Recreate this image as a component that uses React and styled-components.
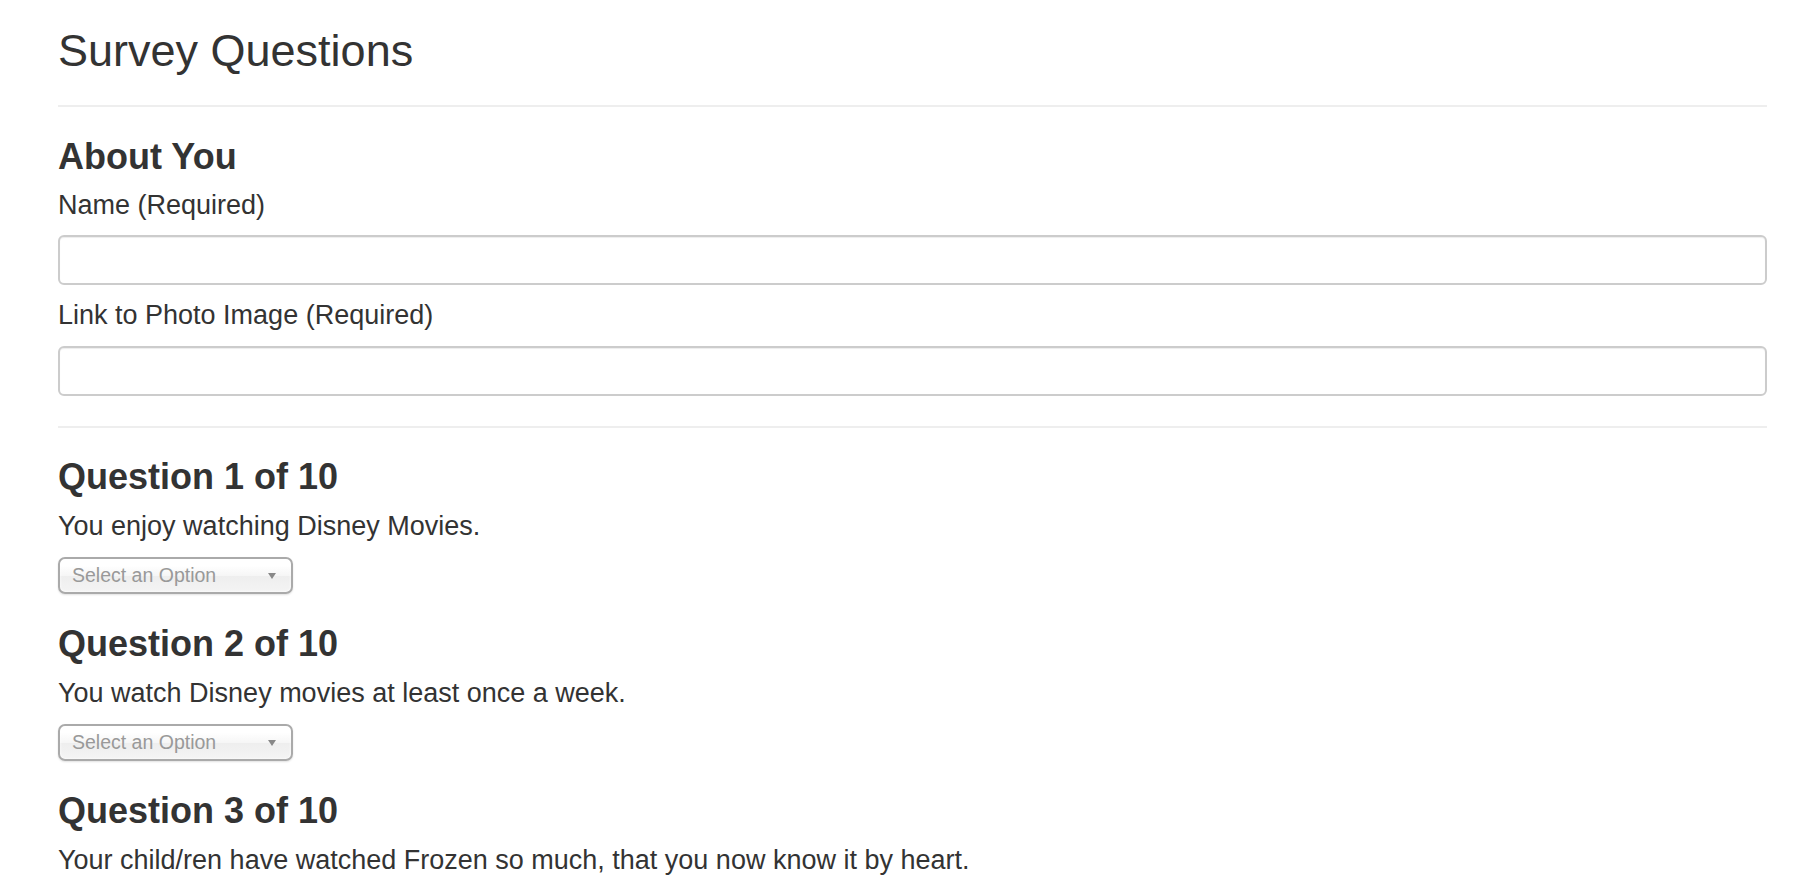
import React from 'react';
import styled, { createGlobalStyle } from 'styled-components';

const GlobalStyle = createGlobalStyle`
  html, body {
    margin: 0;
    padding: 0;
    background: #fff;
  }
  body {
    font-family: "Liberation Sans", Arial, Helvetica, sans-serif;
    color: #333;
  }
  * {
    box-sizing: border-box;
  }
`;

const Page = styled.div`
  padding: 26px 35px 40px 58px;
`;

const Title = styled.h2`
  margin: 0;
  font-size: 45px;
  line-height: 50px;
  font-weight: 400;
  color: #333;
`;

const Rule = styled.hr`
  margin: ${props => props.top}px 0 0;
  border: 0;
  border-top: 2px solid #eee;
  height: 0;
`;

const Section = styled.section`
  display: flex;
  flex-direction: column;
  margin-top: ${props => props.top}px;
`;

const Heading = styled.h3`
  margin: 0;
  font-size: 36px;
  line-height: 40px;
  font-weight: 700;
  color: #333;
`;

const Label = styled.label`
  display: block;
  margin-top: ${props => props.top}px;
  font-size: 27px;
  line-height: 30px;
`;

const Prompt = styled.p`
  margin: 14px 0 0;
  font-size: 27px;
  line-height: 30px;
`;

const TextInput = styled.input`
  display: block;
  width: 100%;
  height: 50px;
  margin-top: ${props => props.top}px;
  padding: 9px 18px;
  font-family: inherit;
  font-size: 21px;
  color: #555;
  background: #fff;
  border: 2px solid #ccc;
  border-radius: 6px;
  box-shadow: inset 0 1px 1px rgba(0, 0, 0, 0.075);
  outline: none;
`;

const Chosen = styled.div`
  position: relative;
  display: flex;
  align-items: center;
  justify-content: space-between;
  width: 235px;
  height: 37px;
  margin-top: 16px;
  padding: 0 15px 0 12px;
  border: 2px solid #aaa;
  border-radius: 7px;
  background: linear-gradient(#fff 20%, #f6f6f6 50%, #eee 52%, #f4f4f4 100%);
  box-shadow: 0 0 3px #fff inset, 0 1px 2px rgba(0, 0, 0, 0.12);
  color: #999;
  font-size: 19.5px;
  line-height: 1;
  cursor: pointer;
`;

const Arrow = styled.span`
  width: 0;
  height: 0;
  border-left: 4px solid transparent;
  border-right: 4px solid transparent;
  border-top: 6px solid #888;
`;

const questions = [
  'You enjoy watching Disney Movies.',
  'You watch Disney movies at least once a week.',
  'Your child/ren have watched Frozen so much, that you now know it by heart.',
];

function OptionSelect() {
  return (
    <Chosen>
      <span>Select an Option</span>
      <Arrow />
    </Chosen>
  );
}

export default function App() {
  return (
    <Page>
      <GlobalStyle />
      <Title>Survey Questions</Title>
      <Rule top={29} />

      <Section top={30}>
        <Heading>About You</Heading>
        <Label top={13}>Name (Required)</Label>
        <TextInput type="text" top={15} />
        <Label top={15}>Link to Photo Image (Required)</Label>
        <TextInput type="text" top={16} />
      </Section>

      <Rule top={30} />

      {questions.map((q, i) => (
        <Section key={i} top={i === 0 ? 29 : 30}>
          <Heading>Question {i + 1} of 10</Heading>
          <Prompt>{q}</Prompt>
          <OptionSelect />
        </Section>
      ))}
    </Page>
  );
}
